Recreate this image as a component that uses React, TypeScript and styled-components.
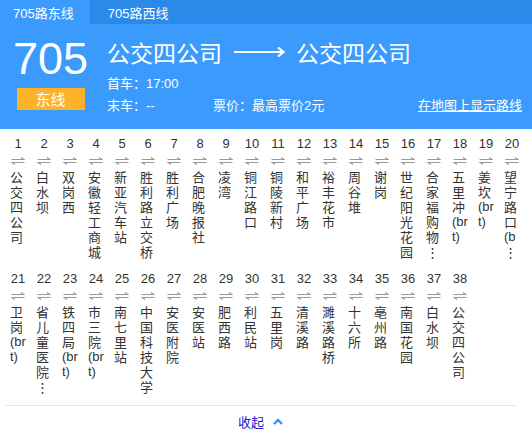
import React from "react";
import styled, { createGlobalStyle } from "styled-components";

const GlobalStyle = createGlobalStyle`
  html, body {
    margin: 0;
    padding: 0;
    background: #fff;
  }
  body {
    font-family: "Noto Sans CJK SC", "Liberation Sans", sans-serif;
  }
`;

const Page = styled.div`
  width: 532px;
  height: 433px;
  overflow: hidden;
  background: #fff;
`;

const TabBar = styled.div`
  display: flex;
  height: 24px;
  background: #2a8aea;
`;

const Tab = styled.div<{ $active?: boolean }>`
  display: flex;
  align-items: center;
  padding: 0 16px 0 13px;
  margin-right: ${(p) => (p.$active ? "2px" : "0")};
  background: ${(p) => (p.$active ? "#3b9bfd" : "transparent")};
  color: #fff;
  font-family: "Liberation Sans", "Noto Sans CJK SC", sans-serif;
  font-size: 13px;
  cursor: pointer;

  & + & {
    padding-left: 16px;
  }
`;

const Header = styled.div`
  display: flex;
  background: #3b9bfd;
  color: #fff;
  padding: 12px 10px 12px 13px;
  height: 105px;
  box-sizing: border-box;
`;

const LineBlock = styled.div`
  display: flex;
  flex-direction: column;
  align-items: center;
  width: 75px;
`;

const LineNumber = styled.div`
  font-family: "Liberation Sans", sans-serif;
  font-size: 45px;
  line-height: 45px;
`;

const DirectionBadge = styled.div`
  margin-top: 7px;
  width: 68px;
  height: 22px;
  line-height: 22px;
  text-align: center;
  background: #fdb22a;
  font-size: 15px;
  color: #fff;
`;

const RouteInfo = styled.div`
  flex: 1;
  display: flex;
  flex-direction: column;
  margin-left: 19px;
`;

const RouteTitle = styled.div`
  display: flex;
  align-items: center;
  font-size: 23px;
  line-height: 28px;
  margin-top: 2px;
  margin-bottom: 7px;
`;

const LongArrow = styled.svg`
  margin: 0 11px 0 12px;
`;

const InfoRow = styled.div`
  display: flex;
  align-items: center;
  font-size: 13px;
  line-height: 22px;
  font-family: "Liberation Sans", "Noto Sans CJK SC", sans-serif;
`;

const InfoCell = styled.span<{ $width?: number }>`
  width: ${(p) => (p.$width ? `${p.$width}px` : "auto")};
`;

const MapLink = styled.a`
  margin-left: auto;
  color: #fff;
  text-decoration: underline;
  cursor: pointer;
`;

const StationGrid = styled.div`
  display: flex;
  flex-wrap: wrap;
  padding: 7px 5px 0;
  height: 276px;
  box-sizing: border-box;
`;

const Station = styled.div`
  width: 26px;
  height: 132px;
  display: flex;
  flex-direction: column;
  align-items: center;
`;

const StationNo = styled.div`
  font-family: "Liberation Sans", sans-serif;
  font-size: 13px;
  line-height: 16px;
  color: #333;
`;

const SwapIcon = styled.svg`
  margin-top: 5px;
  margin-bottom: 4px;
`;

const StationName = styled.div`
  width: 16px;
  font-size: 13px;
  line-height: 15px;
  color: #333;
  text-align: left;
  white-space: nowrap;
  font-family: "Noto Sans CJK SC", "Liberation Sans", sans-serif;
`;

const NameLine = styled.div<{ $latin?: boolean }>`
  height: 15px;
  font-family: ${(p) =>
    p.$latin
      ? `"Liberation Sans", sans-serif`
      : `"Noto Sans CJK SC", sans-serif`};
`;

const Divider = styled.div`
  height: 1px;
  margin: 0 16px 0 5px;
  background: #e6e6e6;
`;

const Footer = styled.div`
  display: flex;
  justify-content: center;
  align-items: center;
  margin: 0 16px 0 5px;
  height: 30px;
`;

const CollapseButton = styled.a`
  display: flex;
  align-items: center;
  color: #1a22cc;
  font-size: 13px;
  cursor: pointer;
`;

const Chevron = styled.svg`
  margin-left: 9px;
`;

const stations: string[] = [
  "公|交|四|公|司",
  "白|水|坝",
  "双|岗|西",
  "安|徽|轻|工|商|城",
  "新|亚|汽|车|站",
  "胜|利|路|立|交|桥",
  "胜|利|广|场",
  "合|肥|晚|报|社",
  "凌|湾",
  "铜|江|路|口",
  "铜|陵|新|村",
  "和|平|广|场",
  "裕|丰|花|市",
  "周|谷|堆",
  "谢|岗",
  "世|纪|阳|光|花|园",
  "合|家|福|购|物|⋮",
  "五|里|冲|(br|t)",
  "姜|坎|(br|t)",
  "望|宁|路|口|(b|⋮",
  "卫|岗|(br|t)",
  "省|儿|童|医|院|⋮",
  "铁|四|局|(br|t)",
  "市|三|院|(br|t)",
  "南|七|里|站",
  "中|国|科|技|大|学",
  "安|医|附|院",
  "安|医|站",
  "肥|西|路",
  "利|民|站",
  "五|里|岗",
  "清|溪|路",
  "濉|溪|路|桥",
  "十|六|所",
  "亳|州|路",
  "南|国|花|园",
  "白|水|坝",
  "公|交|四|公|司",
];

const Swap = () => (
  <SwapIcon width="14" height="8" viewBox="0 0 14 8">
    <path d="M0.5 2.5H13L10 0.5" fill="none" stroke="#999" strokeWidth="1.2" />
    <path d="M13.5 5.5H1L4 7.5" fill="none" stroke="#999" strokeWidth="1.2" />
  </SwapIcon>
);

const App = () => {
  return (
    <Page>
      <GlobalStyle />
      <TabBar>
        <Tab $active>705路东线</Tab>
        <Tab>705路西线</Tab>
      </TabBar>
      <Header>
        <LineBlock>
          <LineNumber>705</LineNumber>
          <DirectionBadge>东线</DirectionBadge>
        </LineBlock>
        <RouteInfo>
          <RouteTitle>
            <span>公交四公司</span>
            <LongArrow width="51" height="12" viewBox="0 0 51 12">
              <path d="M0 6H49" stroke="#fff" strokeWidth="2.2" />
              <path d="M44 1.5L49.5 6L44 10.5" fill="none" stroke="#fff" strokeWidth="2.2" />
            </LongArrow>
            <span>公交四公司</span>
          </RouteTitle>
          <InfoRow>
            <InfoCell>首车：17:00</InfoCell>
          </InfoRow>
          <InfoRow>
            <InfoCell $width={106}>末车：--</InfoCell>
            <InfoCell>票价：最高票价2元</InfoCell>
            <MapLink>在地图上显示路线</MapLink>
          </InfoRow>
        </RouteInfo>
      </Header>
      <StationGrid>
        {stations.map((name, i) => (
          <Station key={i}>
            <StationNo>{i + 1}</StationNo>
            <Swap />
            <StationName>
              {name.split("|").map((line, j) => (
                <NameLine key={j} $latin={/^[()a-z]/.test(line)}>
                  {line}
                </NameLine>
              ))}
            </StationName>
          </Station>
        ))}
      </StationGrid>
      <Divider />
      <Footer>
        <CollapseButton>
          收起
          <Chevron width="10" height="7" viewBox="0 0 10 7">
            <path d="M1 6L5 2L9 6" fill="none" stroke="#3c8cff" strokeWidth="2.4" />
          </Chevron>
        </CollapseButton>
      </Footer>
    </Page>
  );
};

export default App;
